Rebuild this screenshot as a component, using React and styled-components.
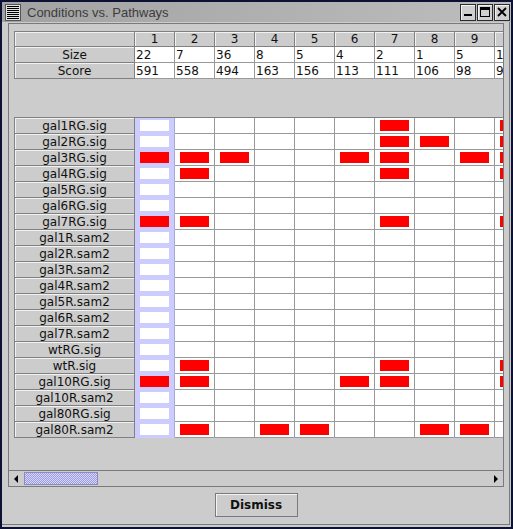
import React from 'react';
import styled, { createGlobalStyle } from 'styled-components';

const GlobalStyle = createGlobalStyle`
  html, body {
    margin: 0;
    padding: 0;
    background: #0b1233;
  }
  * {
    box-sizing: border-box;
  }
`;

const sizes = [22, 7, 36, 8, 5, 4, 2, 1, 5, 1];
const scores = [591, 558, 494, 163, 156, 113, 111, 106, 98, 97];

const rows = [
  ['gal1RG.sig', [7, 10]],
  ['gal2RG.sig', [7, 8, 10]],
  ['gal3RG.sig', [1, 2, 3, 6, 7, 9, 10]],
  ['gal4RG.sig', [2, 7, 10]],
  ['gal5RG.sig', []],
  ['gal6RG.sig', []],
  ['gal7RG.sig', [1, 2, 7, 10]],
  ['gal1R.sam2', []],
  ['gal2R.sam2', []],
  ['gal3R.sam2', []],
  ['gal4R.sam2', []],
  ['gal5R.sam2', []],
  ['gal6R.sam2', []],
  ['gal7R.sam2', []],
  ['wtRG.sig', []],
  ['wtR.sig', [2, 7, 10]],
  ['gal10RG.sig', [1, 2, 6, 7, 10]],
  ['gal10R.sam2', []],
  ['gal80RG.sig', []],
  ['gal80R.sam2', [2, 4, 5, 8, 9]],
];

const SELECTED = 1;

const Window = styled.div`
  width: 513px;
  height: 529px;
  border: 2px solid #0b1233;
  background: #cccccc;
  display: flex;
  flex-direction: column;
  overflow: hidden;
`;

const TitleBar = styled.div`
  height: 20px;
  flex: none;
  display: flex;
  align-items: center;
  padding: 0 1px 0 3px;
  background: linear-gradient(to right, #a2a2a2, #bdbdbd);
`;

const Title = styled.span`
  flex: 1;
  margin-left: 6px;
  font-family: 'Liberation Sans', Arial, sans-serif;
  font-size: 13px;
  color: #3c3c3c;
  white-space: nowrap;
`;

const WinButtons = styled.div`
  display: flex;
  gap: 1px;
`;

const WinButton = styled.div`
  width: 16px;
  height: 17px;
  background: #cfcfcf;
  border: 1px solid #2c2c2c;
  box-shadow: inset 1px 1px 0 #f4f4f4;
  display: flex;
  align-items: center;
  justify-content: center;
`;

const Frame = styled.div`
  flex: 1;
  display: flex;
  flex-direction: column;
  padding: 1px 5px 0 6px;
  margin: 0 1px 2px 0;
  border-right: 1px solid #7a7a7a;
  border-bottom: 1px solid #7a7a7a;
`;

const Pane = styled.div`
  flex: 1;
  display: flex;
  flex-direction: column;
  border: 1px solid #7a7a7a;
  min-height: 0;
`;

const Viewport = styled.div`
  flex: 1;
  overflow: hidden;
  padding: 7px 0 0 5px;
  display: flex;
  flex-direction: column;
  gap: 38px;
  font-family: 'DejaVu Sans', Verdana, sans-serif;
  font-size: 12px;
  color: #111;
`;

const Grid = styled.div`
  display: grid;
  grid-template-columns: 120px repeat(10, 40px);
  width: 520px;
  border-top: 1px solid #808080;
  border-left: 1px solid #808080;
`;

const HeadCell = styled.div`
  height: ${p => p.$h}px;
  background: #cccccc;
  border-right: 1px solid #808080;
  border-bottom: 1px solid #808080;
  box-shadow: inset 1px 1px 0 #f2f2f2;
  display: flex;
  align-items: center;
  justify-content: center;
  line-height: 1;
  white-space: nowrap;
`;

const ValueCell = styled.div`
  height: 16px;
  background: #ffffff;
  border-right: 1px solid #9a9a9a;
  border-bottom: 1px solid #9a9a9a;
  padding-left: 1px;
  display: flex;
  align-items: center;
  line-height: 1;
  white-space: nowrap;
`;

const Cell = styled.div`
  height: 16px;
  background: ${p => (p.$selected ? '#ccccff' : '#ffffff')};
  border-right: 1px solid ${p => (p.$selected ? '#a8a8d8' : '#9a9a9a')};
  border-bottom: 1px solid ${p => (p.$selected ? '#ccccff' : '#9a9a9a')};
  padding: 2px 5px 2px 5px;
  display: flex;
`;

const Mark = styled.div`
  flex: 1;
  background: ${p => (p.$on ? '#ff0000' : p.$selected ? '#ffffff' : 'transparent')};
`;

const ScrollBar = styled.div`
  height: 16px;
  flex: none;
  display: flex;
  border-top: 1px solid #7a7a7a;
  background: #cccccc;
`;

const Arrow = styled.div`
  width: 15px;
  flex: none;
  display: flex;
  align-items: center;
  justify-content: center;
  background: #cccccc;
`;

const Track = styled.div`
  flex: 1;
  display: flex;
  padding: 1px 0;
`;

const Thumb = styled.div`
  width: 74px;
  border: 1px solid #8a8ac4;
  background-color: #ccccff;
  background-image: repeating-conic-gradient(#9c9cdc 0 25%, #d6d6ff 0 50%);
  background-size: 2px 2px;
`;

const ButtonRow = styled.div`
  flex: none;
  display: flex;
  justify-content: center;
  padding: 6px 0 7px;
`;

const Button = styled.button`
  width: 83px;
  height: 24px;
  background: #cccccc;
  border: 1px solid #7a7a7a;
  box-shadow: inset 1px 1px 0 #f4f4f4;
  font-family: 'DejaVu Sans', Verdana, sans-serif;
  font-weight: bold;
  font-size: 12px;
  color: #111;
  padding: 0;
`;

function MenuIcon() {
  return (
    <svg width="16" height="17" viewBox="0 0 16 17">
      <rect x="0.5" y="0.5" width="15" height="16" fill="#e2e2e2" stroke="#555" />
      {[2, 4, 6, 8, 10, 12, 14].map(y => (
        <rect key={y} x="2" y={y} width="12" height="1" fill="#000" />
      ))}
    </svg>
  );
}

function App() {
  return (
    <>
      <GlobalStyle />
      <Window>
        <TitleBar>
          <MenuIcon />
          <Title>Conditions vs. Pathways</Title>
          <WinButtons>
            <WinButton>
              <svg width="10" height="10" viewBox="0 0 10 10">
                <rect x="1" y="7" width="8" height="2" fill="#000" />
              </svg>
            </WinButton>
            <WinButton>
              <svg width="10" height="10" viewBox="0 0 10 10">
                <rect x="0.5" y="0.5" width="9" height="9" fill="none" stroke="#000" />
                <rect x="0" y="0" width="10" height="3" fill="#000" />
              </svg>
            </WinButton>
            <WinButton>
              <svg width="10" height="10" viewBox="0 0 10 10">
                <path d="M1 1 L9 9 M9 1 L1 9" stroke="#000" strokeWidth="1.8" />
              </svg>
            </WinButton>
          </WinButtons>
        </TitleBar>
        <Frame>
          <Pane>
            <Viewport>
              <Grid>
                <HeadCell $h={15} />
                {sizes.map((_, i) => (
                  <HeadCell key={i} $h={15}>{i + 1}</HeadCell>
                ))}
                <HeadCell $h={16}>Size</HeadCell>
                {sizes.map((s, i) => (
                  <ValueCell key={i}>{s}</ValueCell>
                ))}
                <HeadCell $h={16}>Score</HeadCell>
                {scores.map((s, i) => (
                  <ValueCell key={i}>{s}</ValueCell>
                ))}
              </Grid>
              <Grid>
                {rows.map(([name, marks]) => (
                  <React.Fragment key={name}>
                    <HeadCell $h={16}>{name}</HeadCell>
                    {sizes.map((_, i) => {
                      const col = i + 1;
                      const sel = col === SELECTED;
                      return (
                        <Cell key={col} $selected={sel}>
                          <Mark $on={marks.includes(col)} $selected={sel} />
                        </Cell>
                      );
                    })}
                  </React.Fragment>
                ))}
              </Grid>
            </Viewport>
            <ScrollBar>
              <Arrow>
                <svg width="5" height="8" viewBox="0 0 5 8">
                  <path d="M4 0 L0 4 L4 8 Z" fill="#000" />
                </svg>
              </Arrow>
              <Track>
                <Thumb />
              </Track>
              <Arrow>
                <svg width="5" height="8" viewBox="0 0 5 8">
                  <path d="M1 0 L5 4 L1 8 Z" fill="#000" />
                </svg>
              </Arrow>
            </ScrollBar>
          </Pane>
          <ButtonRow>
            <Button>Dismiss</Button>
          </ButtonRow>
        </Frame>
      </Window>
    </>
  );
}

export default App;
